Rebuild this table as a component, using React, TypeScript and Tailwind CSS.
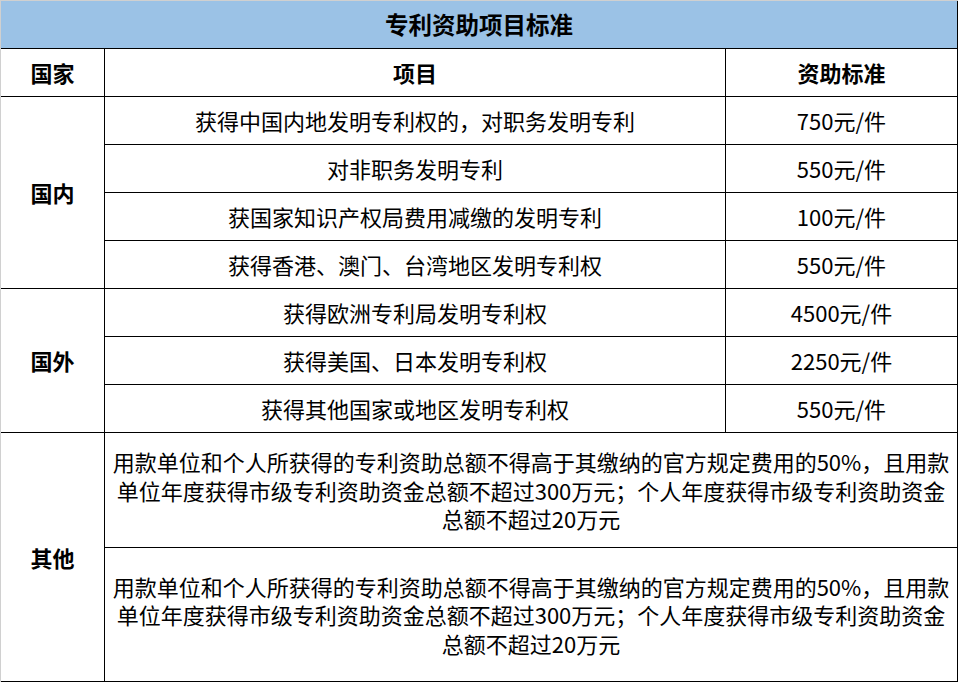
import React from "react";

const font = { fontFamily: '"Noto Sans CJK SC", "Noto Sans", sans-serif' };

const cell = "border-r border-b border-black flex items-center justify-center text-center";

const domestic = [
  ["获得中国内地发明专利权的，对职务发明专利", "750元/件"],
  ["对非职务发明专利", "550元/件"],
  ["获国家知识产权局费用减缴的发明专利", "100元/件"],
  ["获得香港、澳门、台湾地区发明专利权", "550元/件"],
];

const foreign = [
  ["获得欧洲专利局发明专利权", "4500元/件"],
  ["获得美国、日本发明专利权", "2250元/件"],
  ["获得其他国家或地区发明专利权", "550元/件"],
];

function Note() {
  return (
    <div className="leading-[28.5px]">
      用款单位和个人所获得的专利资助总额不得高于其缴纳的官方规定费用的50%，且用款
      <br />
      单位年度获得市级专利资助资金总额不超过300万元；个人年度获得市级专利资助资金
      <br />
      总额不超过20万元
    </div>
  );
}

export default function App() {
  return (
    <div
      className="w-[959px] h-[682px] bg-white text-black text-[22px] overflow-hidden"
      style={font}
    >
      <div className="w-[958px] border-t border-l border-[#d0d0d0]">
        <div className="h-[48px] bg-[#9bc2e6] border-r border-b border-black flex items-center justify-center font-bold text-[23.5px]">
          专利资助项目标准
        </div>
        <div className="grid grid-cols-[104px_621px_232px] grid-rows-[48px_48px_48px_48px_48px_48px_48px_48px_115px_134px]">
          <div className={`${cell} font-bold`}>国家</div>
          <div className={`${cell} font-bold`}>项目</div>
          <div className={`${cell} font-bold`}>资助标准</div>

          <div className={`${cell} row-span-4 font-bold`}>国内</div>
          {domestic.map(([a, b], i) => (
            <React.Fragment key={`d${i}`}>
              <div className={`${cell} col-start-2`}>{a}</div>
              <div className={`${cell} col-start-3`}>{b}</div>
            </React.Fragment>
          ))}

          <div className={`${cell} row-span-3 font-bold`}>国外</div>
          {foreign.map(([a, b], i) => (
            <React.Fragment key={`f${i}`}>
              <div className={`${cell} col-start-2`}>{a}</div>
              <div className={`${cell} col-start-3`}>{b}</div>
            </React.Fragment>
          ))}

          <div className={`${cell} row-span-2 font-bold`}>其他</div>
          <div className={`${cell} col-start-2 col-span-2`}>
            <Note />
          </div>
          <div className={`${cell} col-start-2 col-span-2`}>
            <Note />
          </div>
        </div>
      </div>
    </div>
  );
}
